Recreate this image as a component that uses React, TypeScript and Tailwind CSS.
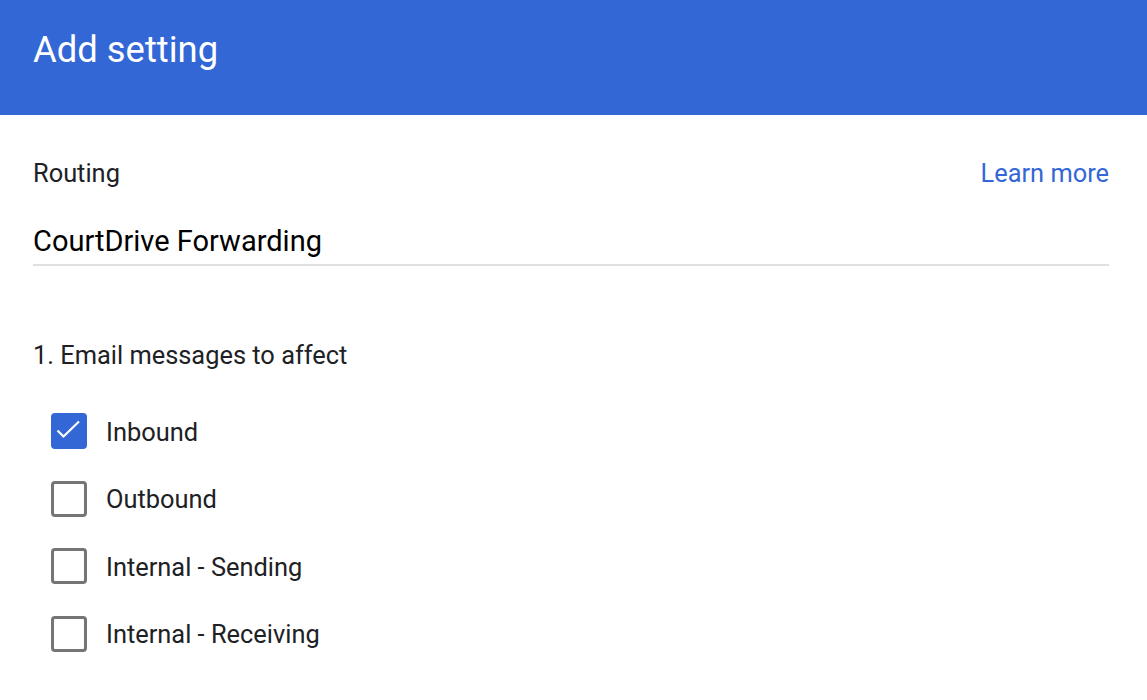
import React from "react";

function Box({ checked }: { checked: boolean }) {
  if (checked) {
    return (
      <div className="w-[36px] h-[36px] rounded-[4px] bg-[#3367d6] shrink-0 flex items-center justify-center">
        <svg width="36" height="36" viewBox="0 0 36 36">
          <path d="M6.5 17.5 L12.5 23.5 L28 8.5" fill="none" stroke="#ffffff" strokeWidth="2.2" />
        </svg>
      </div>
    );
  }
  return <div className="w-[36px] h-[36px] rounded-[4px] border-[3px] border-[#757575] bg-white shrink-0" />;
}

export default function App() {
  const items = [
    { label: "Inbound", checked: true },
    { label: "Outbound", checked: false },
    { label: "Internal - Sending", checked: false },
    { label: "Internal - Receiving", checked: false },
  ];
  return (
    <div className="w-[1147px] h-[700px] bg-white overflow-hidden" style={{ fontFamily: "Roboto, 'Liberation Sans', sans-serif" }}>
      <div className="h-[115px] bg-[#3367d6] pl-[33px] pt-[28px]">
        <h1 className="text-[36.4px] leading-[44px] text-white font-normal">Add setting</h1>
      </div>
      <div className="pl-[33px] pr-[38px]">
        <div className="mt-[43px] flex justify-between items-start">
          <span className="text-[25.4px] leading-[30px] text-[#202124]">Routing</span>
          <a className="text-[25.4px] leading-[30px] text-[#3367d6]">Learn more</a>
        </div>
        <div className="mt-[36px] pb-[6px] border-b-2 border-[#e0e0e0]">
          <span className="text-[29px] leading-[34px] text-black">CourtDrive Forwarding</span>
        </div>
        <div className="mt-[73.5px] text-[25.4px] leading-[30px] text-[#202124]">1. Email messages to affect</div>
        <div className="mt-[43.5px] flex flex-col gap-[31.67px] pl-[18px]">
          {items.map((it) => (
            <div key={it.label} className="flex items-center h-[36px]">
              <Box checked={it.checked} />
              <span className="ml-[19px] pt-[1px] text-[25.4px] leading-[30px] text-[#202124]">{it.label}</span>
            </div>
          ))}
        </div>
      </div>
    </div>
  );
}
